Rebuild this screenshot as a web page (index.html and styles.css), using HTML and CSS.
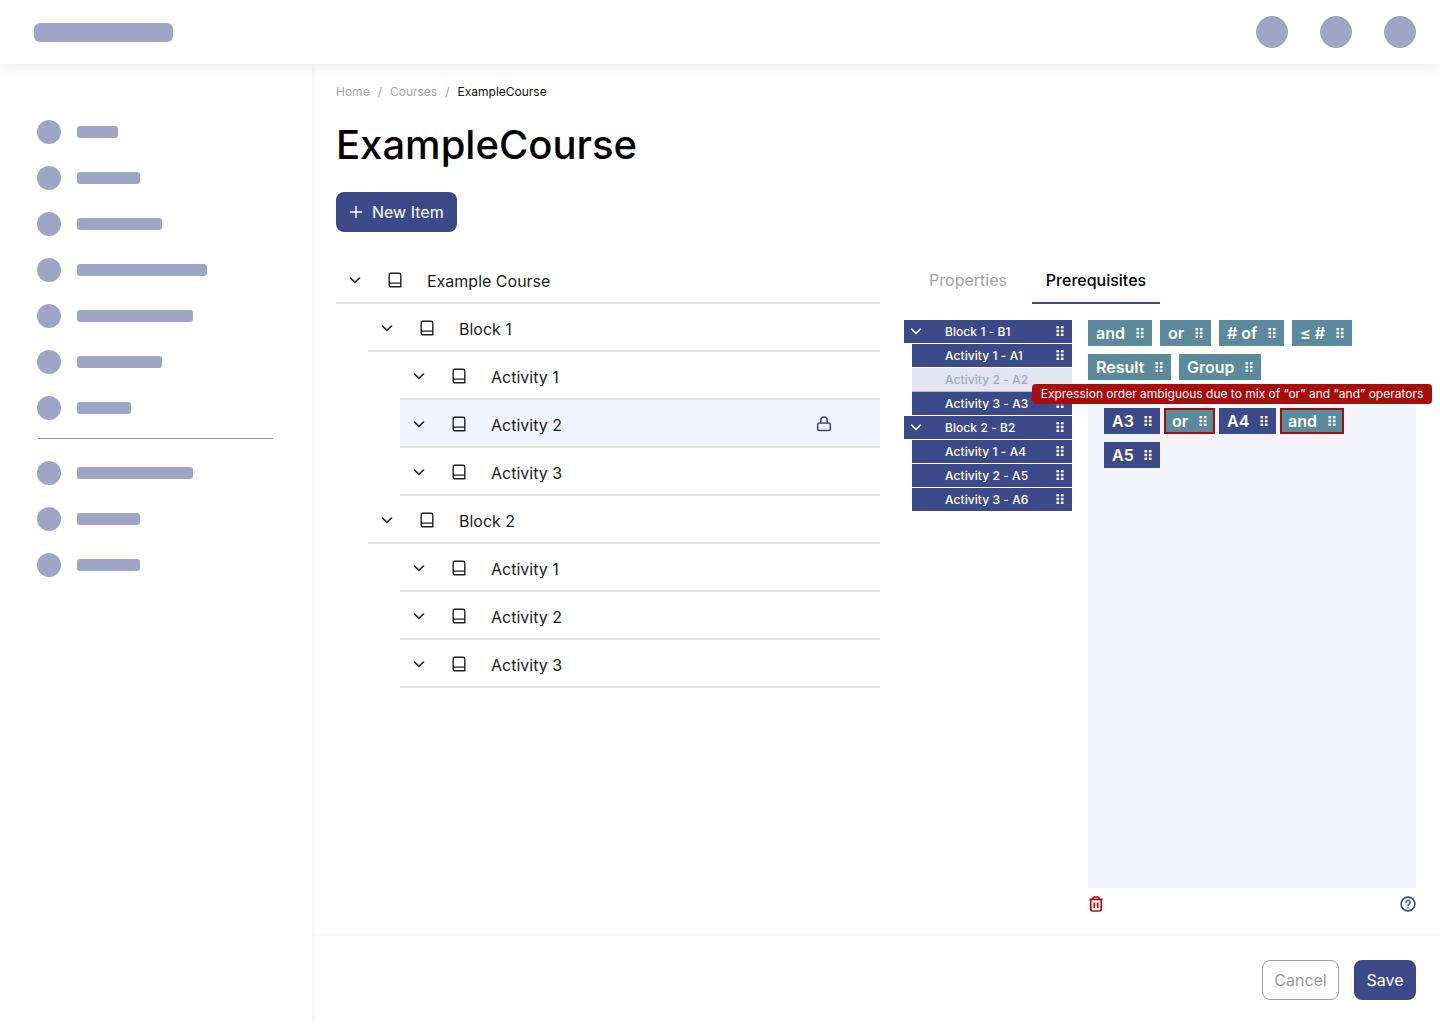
FILE: index.html
```html
<!DOCTYPE html>
<html lang="en">
<head>
<meta charset="utf-8">
<title>ExampleCourse</title>
<link rel="stylesheet" href="styles.css">
</head>
<body>
<svg class="defs" width="0" height="0" aria-hidden="true">
  <symbol id="chev" viewBox="0 0 16 16"><path d="M3.500 6l4.500 4.500L12.500 6" fill="none" stroke="currentColor" stroke-width="1.600" stroke-linecap="round" stroke-linejoin="round"/></symbol>
  <symbol id="book" viewBox="0 0 16 16"><path d="M2.200 12.900V2.900A1.600 1.600 0 0 1 3.800 1.300h8.400a1.600 1.600 0 0 1 1.600 1.600v11.800H4A1.800 1.800 0 0 1 2.200 12.900a1.800 1.800 0 0 1 1.800-1.800h9.800" fill="none" stroke="currentColor" stroke-width="1.400" stroke-linejoin="round"/></symbol>
  <symbol id="dots" viewBox="0 0 8 12"><g fill="currentColor"><rect x="0.500" y="1" width="2.600" height="2.400"/><rect x="4.900" y="1" width="2.600" height="2.400"/><rect x="0.500" y="4.800" width="2.600" height="2.400"/><rect x="4.900" y="4.800" width="2.600" height="2.400"/><rect x="0.500" y="8.600" width="2.600" height="2.400"/><rect x="4.900" y="8.600" width="2.600" height="2.400"/></g></symbol>
</svg>

<header class="topbar">
  <div class="logo"></div>
  <div class="top-actions"><span class="avatar"></span><span class="avatar"></span><span class="avatar"></span></div>
</header>

<div class="shell">
  <nav class="sidebar">
    <ul class="nav-list">
      <li class="nav-item"><span class="dot"></span><span class="bar w41"></span></li>
      <li class="nav-item"><span class="dot"></span><span class="bar w63"></span></li>
      <li class="nav-item"><span class="dot"></span><span class="bar w85"></span></li>
      <li class="nav-item"><span class="dot"></span><span class="bar w130"></span></li>
      <li class="nav-item"><span class="dot"></span><span class="bar w116"></span></li>
      <li class="nav-item"><span class="dot"></span><span class="bar w85"></span></li>
      <li class="nav-item"><span class="dot"></span><span class="bar w54"></span></li>
    </ul>
    <hr class="nav-rule">
    <ul class="nav-list">
      <li class="nav-item"><span class="dot"></span><span class="bar w116"></span></li>
      <li class="nav-item"><span class="dot"></span><span class="bar w63"></span></li>
      <li class="nav-item"><span class="dot"></span><span class="bar w63"></span></li>
    </ul>
  </nav>

  <div class="main">
    <main class="content">
      <ol class="crumbs">
        <li>Home</li><li class="sep">/</li><li>Courses</li><li class="sep">/</li><li class="here">ExampleCourse</li>
      </ol>
      <h1 class="title">ExampleCourse</h1>
      <button class="btn btn-new" type="button">
        <svg class="plus" viewBox="0 0 16 16"><path d="M8 2.500v11M2.500 8h11" stroke="currentColor" stroke-width="1.400" stroke-linecap="round"/></svg>
        New Item
      </button>

      <div class="columns">
        <section class="tree">
          <div class="row l0"><svg class="i-chev"><use href="#chev"/></svg><svg class="i-book"><use href="#book"/></svg><span class="row-text">Example Course</span></div>
          <div class="row l1"><svg class="i-chev"><use href="#chev"/></svg><svg class="i-book"><use href="#book"/></svg><span class="row-text">Block 1</span></div>
          <div class="row l2"><svg class="i-chev"><use href="#chev"/></svg><svg class="i-book"><use href="#book"/></svg><span class="row-text">Activity 1</span></div>
          <div class="row l2 active"><svg class="i-chev"><use href="#chev"/></svg><svg class="i-book"><use href="#book"/></svg><span class="row-text">Activity 2</span>
            <svg class="i-lock" viewBox="0 0 16 16"><path d="M4.800 7V4.200a3.200 3.200 0 0 1 6.400 0V7" fill="none" stroke="currentColor" stroke-width="1.600"/><rect x="1.700" y="7" width="12.600" height="7.500" rx="1.600" fill="none" stroke="currentColor" stroke-width="1.600"/></svg>
          </div>
          <div class="row l2"><svg class="i-chev"><use href="#chev"/></svg><svg class="i-book"><use href="#book"/></svg><span class="row-text">Activity 3</span></div>
          <div class="row l1"><svg class="i-chev"><use href="#chev"/></svg><svg class="i-book"><use href="#book"/></svg><span class="row-text">Block 2</span></div>
          <div class="row l2"><svg class="i-chev"><use href="#chev"/></svg><svg class="i-book"><use href="#book"/></svg><span class="row-text">Activity 1</span></div>
          <div class="row l2"><svg class="i-chev"><use href="#chev"/></svg><svg class="i-book"><use href="#book"/></svg><span class="row-text">Activity 2</span></div>
          <div class="row l2"><svg class="i-chev"><use href="#chev"/></svg><svg class="i-book"><use href="#book"/></svg><span class="row-text">Activity 3</span></div>
        </section>

        <section class="panel">
          <div class="tabs"><span class="tab">Properties</span><span class="tab current">Prerequisites</span></div>
          <div class="builder">
            <ul class="source">
              <li class="src block"><svg class="i-mini"><use href="#chev"/></svg><span class="src-text">Block 1 - B1</span><svg class="i-dots"><use href="#dots"/></svg></li>
              <li class="src"><span class="src-text">Activity 1 - A1</span><svg class="i-dots"><use href="#dots"/></svg></li>
              <li class="src off"><span class="src-text">Activity 2 - A2</span></li>
              <li class="src"><span class="src-text">Activity 3 - A3</span><svg class="i-dots"><use href="#dots"/></svg></li>
              <li class="src block"><svg class="i-mini"><use href="#chev"/></svg><span class="src-text">Block 2 - B2</span><svg class="i-dots"><use href="#dots"/></svg></li>
              <li class="src"><span class="src-text">Activity 1 - A4</span><svg class="i-dots"><use href="#dots"/></svg></li>
              <li class="src"><span class="src-text">Activity 2 - A5</span><svg class="i-dots"><use href="#dots"/></svg></li>
              <li class="src"><span class="src-text">Activity 3 - A6</span><svg class="i-dots"><use href="#dots"/></svg></li>
            </ul>
            <div class="expr">
              <div class="palette">
                <span class="chip op w-and">and<svg class="i-dots"><use href="#dots"/></svg></span>
                <span class="chip op w-or">or<svg class="i-dots"><use href="#dots"/></svg></span>
                <span class="chip op w-of"># of<svg class="i-dots"><use href="#dots"/></svg></span>
                <span class="chip op w-le">≤ #<svg class="i-dots"><use href="#dots"/></svg></span>
                <span class="chip op w-res">Result<svg class="i-dots"><use href="#dots"/></svg></span>
                <span class="chip op w-grp">Group<svg class="i-dots"><use href="#dots"/></svg></span>
              </div>
              <div class="drop">
                <div class="tooltip">Expression order ambiguous due to mix of “or” and “and” operators</div>
                <span class="chip act w-a">A3<svg class="i-dots"><use href="#dots"/></svg></span>
                <span class="chip op bad w-or">or<svg class="i-dots"><use href="#dots"/></svg></span>
                <span class="chip act w-a4">A4<svg class="i-dots"><use href="#dots"/></svg></span>
                <span class="chip op bad w-and">and<svg class="i-dots"><use href="#dots"/></svg></span>
                <span class="chip act w-a">A5<svg class="i-dots"><use href="#dots"/></svg></span>
              </div>
              <div class="expr-tools">
                <svg class="i-trash" viewBox="0 0 16 16"><path d="M1.500 3.300h13M5.200 3.300V1.900a.9.9 0 0 1 .9-.9h3.800a.9.9 0 0 1 .9.900v1.400M2.800 3.300v9.900a1.800 1.800 0 0 0 1.800 1.800h6.800a1.800 1.800 0 0 0 1.800-1.800V3.300M6.300 6.500v5.500M9.700 6.500v5.500" fill="none" stroke="currentColor" stroke-width="1.700"/></svg>
                <svg class="i-help" viewBox="0 0 16 16"><circle cx="8" cy="8" r="6.900" fill="none" stroke="currentColor" stroke-width="1.600"/><path d="M6 6.300a2 2 0 1 1 3 1.800c-.7.400-1 .8-1 1.500" fill="none" stroke="currentColor" stroke-width="1.500" stroke-linecap="round"/><circle cx="8" cy="11.600" r=".9" fill="currentColor"/></svg>
              </div>
            </div>
          </div>
        </section>
      </div>
    </main>

    <footer class="footer">
      <button class="btn btn-ghost" type="button">Cancel</button>
      <button class="btn btn-save" type="button">Save</button>
    </footer>
  </div>
</div>
</body>
</html>
```
FILE: styles.css
```css
* { box-sizing: border-box; }
html, body { margin: 0; height: 1024px; overflow: hidden; background: #fff; }
body { font-family: Inter, "Liberation Sans", sans-serif; color: #000; }
ul, ol { list-style: none; margin: 0; padding: 0; }
.defs { position: absolute; }

.topbar {
  position: relative; z-index: 2; height: 64px; background: #fff;
  display: flex; align-items: center; justify-content: space-between;
  padding: 0 24px 0 34px; box-shadow: 0 3px 12px rgba(0,0,0,.08);
}
.logo { width: 139px; height: 19px; border-radius: 6px; background: #9fa6c5; }
.top-actions { display: flex; gap: 32px; }
.avatar { width: 32px; height: 32px; border-radius: 50%; background: #9fa6c5; }

.shell { display: flex; height: 960px; }
.sidebar {
  width: 312px; flex: none; padding: 56px 0 0 37px; background: #fff;
  box-shadow: 1px 0 5px rgba(0,0,0,.07); position: relative; z-index: 1;
}
.nav-list { display: flex; flex-direction: column; gap: 22px; }
.nav-item { display: flex; align-items: center; gap: 16px; height: 24px; }
.dot { width: 24px; height: 24px; border-radius: 50%; background: #9fa6c5; }
.bar { height: 12px; border-radius: 3px; background: #9fa6c5; }
.w41 { width: 41px; } .w54 { width: 54px; } .w63 { width: 63px; } .w85 { width: 85px; }
.w116 { width: 116px; } .w130 { width: 130px; }
.nav-rule { width: 235px; margin: 18px 0 22px 1px; border: 0; border-top: 1px solid #8a92b8; }

.main { flex: 1; display: flex; flex-direction: column; min-width: 0; }
.content { flex: 1; padding: 20px 24px 0; }
.crumbs { display: flex; font-size: 12px; line-height: 16px; color: #a3a3a3; gap: 8px; }
.here { color: #111; }
.title { margin: 21px 0 0; font-size: 40px; line-height: 48px; font-weight: 500; }

.btn {
  font-family: inherit; font-size: 16px; line-height: 24px; height: 40px; border-radius: 8px;
  border: 0; display: inline-flex; align-items: center;
}
.btn-new { margin-top: 23px; width: 121px; padding: 0 0 0 12px; gap: 8px; background: #3c4a8a; color: #fff; }
.plus { width: 16px; height: 16px; }

.columns { display: flex; gap: 24px; margin-top: 24px; }
.tree { width: 544px; flex: none; }
.row {
  height: 48px; display: flex; align-items: center; position: relative;
  border-bottom: 2px solid #e2e2e2; padding: 2px 0 0 11px; font-size: 16px; color: #1a1a1a;
}
.l1 { margin-left: 32px; }
.l2 { margin-left: 64px; }
.active { background: #f1f3fd; }
.i-chev { width: 16px; height: 16px; color: #222; flex: none; }
.i-book { width: 16px; height: 16px; color: #222; flex: none; margin-left: 24px; }
.row-text { margin-left: 24px; padding-top: 2px; }
.i-lock { position: absolute; left: 416px; top: 16px; width: 16px; height: 16px; color: #3c4a8a; }

.panel { width: 512px; flex: none; }
.tabs { display: flex; height: 48px; }
.tab {
  width: 128px; text-align: center; font-size: 16px; line-height: 46px; color: #a3a3a3;
  padding-top: 1px; border-bottom: 2px solid transparent;
}
.tab.current { color: #000; font-weight: 500; border-bottom-color: #3c4a8a; }
.builder { display: flex; gap: 16px; margin-top: 16px; }
.source { width: 168px; flex: none; }
.src {
  height: 24px; margin-left: 8px; padding: 0 8px 1px 33px; border-bottom: 1px solid #fff;
  display: flex; align-items: center; justify-content: space-between;
  background: #3c4a8a; color: #fff; font-size: 12px; font-weight: 500; letter-spacing: .07px;
}
.src.block { margin-left: 0; padding-left: 4px; }
.src.block .src-text { margin-left: 21px; margin-right: auto; }
.src.off { background: #e2e4ef; color: #a3a9c7; border-bottom-color: #b4b9d2; }
.i-mini { width: 16px; height: 16px; color: #fff; flex: none; }
.i-dots { width: 8px; height: 12px; flex: none; margin-left: 10px; }

.expr { width: 328px; flex: none; display: flex; flex-direction: column; }
.palette { display: flex; flex-wrap: wrap; align-content: flex-start; gap: 8px; height: 68px; }
.chip {
  height: 26px; padding: 0 8px; display: inline-flex; align-items: center; justify-content: space-between;
  font-size: 16px; font-weight: 600; color: #fff;
}
.op { background: #5a8a9c; }
.act { background: #3c4a8a; }
.w-and { width: 64px; }
.w-or { width: 51px; }
.w-of { width: 65px; }
.w-le { width: 60px; }
.w-res { width: 83px; }
.w-grp { width: 82px; }
.w-a { width: 56px; }
.w-a4 { width: 57px; }
.drop {
  position: relative; height: 500px; background: #f3f4f9; padding: 20px 16px 0;
  display: flex; flex-wrap: wrap; align-content: flex-start; column-gap: 4px; row-gap: 8px;
}
.bad { border: 2px solid #a80d0d; padding: 0 6px; }
.tooltip {
  position: absolute; left: -56px; top: -4px; width: 400px; height: 20px; border-radius: 4px;
  background: #a80d0d; color: #fff; font-size: 12px; line-height: 20px; text-align: center; z-index: 3;
}
.expr-tools { display: flex; justify-content: space-between; margin-top: 8px; }
.i-trash { width: 16px; height: 16px; color: #b20d0d; }
.i-help { width: 16px; height: 16px; color: #3c4a8a; }

.footer {
  height: 88px; display: flex; justify-content: flex-end; align-items: flex-start; gap: 15px;
  padding: 24px 24px 0; box-shadow: 0 -2px 5px rgba(0,0,0,.04);
}
.btn-ghost { width: 77px; justify-content: center; background: #fff; color: #9a9a9a; border: 1px solid #a3a3a3; }
.btn-save { width: 62px; justify-content: center; background: #3c4a8a; color: #fff; }
```
